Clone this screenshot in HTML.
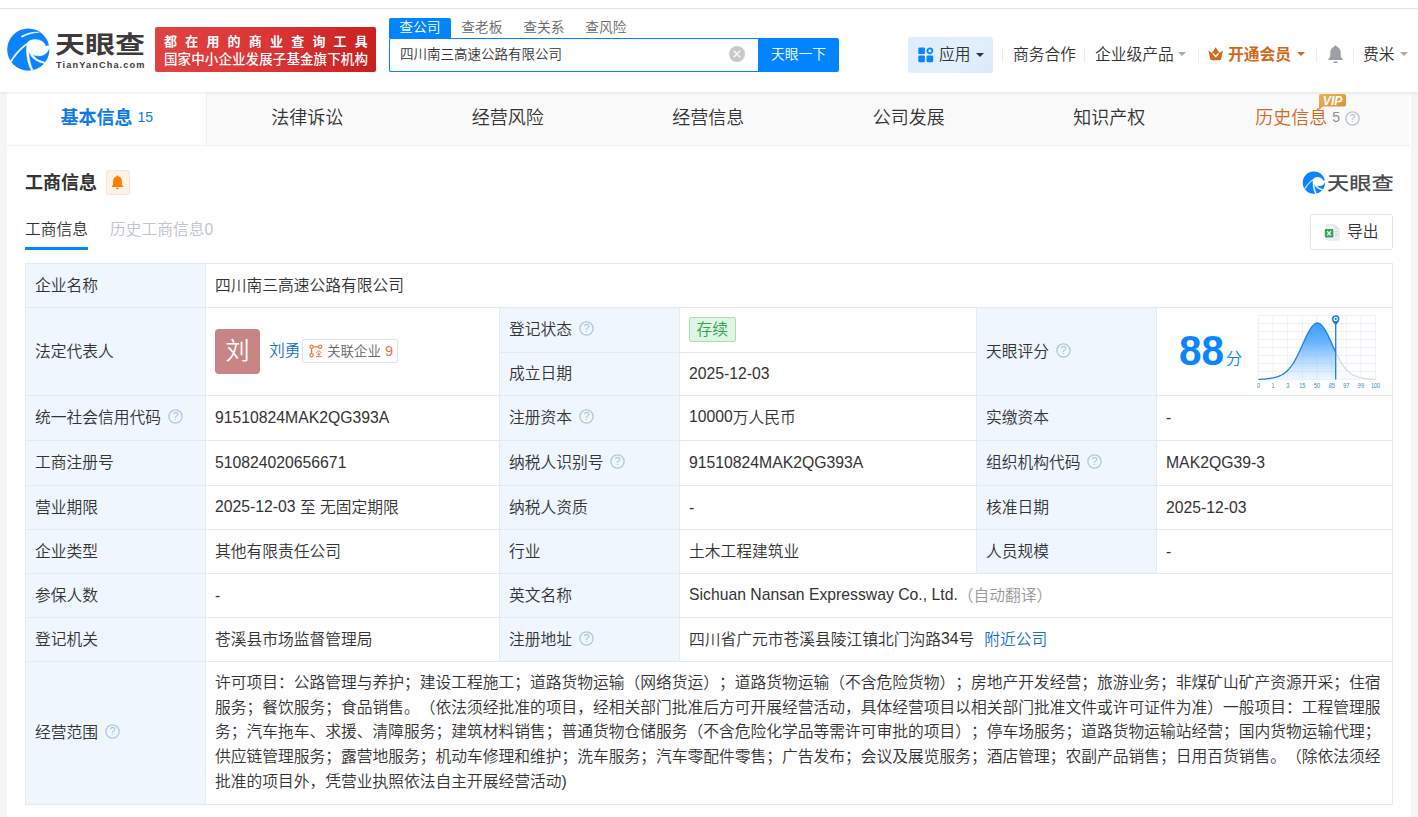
<!DOCTYPE html>
<html lang="zh-CN">
<head>
<meta charset="utf-8">
<title>四川南三高速公路有限公司 - 天眼查</title>
<style>
*{box-sizing:border-box;margin:0;padding:0}
html,body{width:1418px;height:817px;overflow:hidden;background:#f5f5f5}
body{position:relative;text-spacing-trim:space-all;font-weight:350;font-family:"Liberation Sans","Noto Sans CJK SC",sans-serif;font-size:15.75px;color:#333;-webkit-font-smoothing:antialiased}
.abs{position:absolute}
/* ---------- header ---------- */
#top{position:absolute;left:0;top:0;width:1418px;height:92px;background:#fff;box-shadow:0 1px 4px rgba(0,0,0,.09);z-index:5}
#topline{position:absolute;left:0;top:8px;width:1418px;height:1px;background:#e2e2e2}
#logo{position:absolute;left:7px;top:28px;width:43px;height:43px}
#logotxt{position:absolute;left:55px;top:24.5px;width:94px;height:40px;font-size:30px;font-weight:700;color:#3e3a39;line-height:40px;letter-spacing:0;white-space:nowrap;transform-origin:0 50%;transform:scale(1,.8)}
#logosub{position:absolute;left:56px;top:58.5px;font-size:9.2px;font-weight:700;color:#3e3a39;letter-spacing:1.12px;line-height:13px;white-space:nowrap}
#banner{position:absolute;left:155px;top:27px;width:221px;height:45px;border-radius:2px;background:linear-gradient(100deg,#e04343 0%,#dc3535 50%,#c91f1f 100%);color:#fff;font-weight:700;font-size:14px;white-space:nowrap}
#banner .l1{position:absolute;left:9px;top:6.5px;line-height:16px;font-size:13px;letter-spacing:8.2px}
#banner .l2{position:absolute;left:9px;top:25px;line-height:16px;font-size:13.5px;font-weight:500;letter-spacing:.1px}
#stabs{position:absolute;left:389px;top:18px;height:20px;display:flex;font-size:13.75px;line-height:20px;color:#666}
#stabs span{display:block;width:62px;text-align:center}
#stabs span.on{background:#0084ff;color:#fff;border-radius:2px 2px 0 0}
#sinput{position:absolute;left:389px;top:38px;width:370px;height:34px;border:1px solid #0084ff;border-right:none;border-radius:2px 0 0 2px;background:#fff;font-size:13.5px;line-height:32px;padding-left:10px;color:#333}
#sclear{position:absolute;left:729px;top:46px;width:16px;height:16px}
#sbtn{position:absolute;left:758px;top:38px;width:81px;height:34px;background:#0084ff;border-radius:0 2px 2px 0;color:#fff;font-size:13.75px;line-height:34px;text-align:center}
#app{position:absolute;left:908px;top:37px;width:85px;height:36px;border-radius:3px;background:linear-gradient(135deg,#deedfc 0%,#e3effc 60%,#d9e8f9 100%)}
.nav{position:absolute;top:43px;line-height:24px;font-size:15.75px;color:#333;white-space:nowrap}
.sep{position:absolute;top:48px;width:1px;height:14px;background:#ececec}
.caret{position:absolute;width:0;height:0;border-left:4px solid transparent;border-right:4px solid transparent;border-top:4.5px solid #aaa}
/* ---------- tabs ---------- */
#main{position:absolute;left:7px;top:92px;width:1404px;height:725px;background:#fff}
#tabs{position:absolute;left:-.5px;top:0;width:1403.5px;height:54px;background:#fafafa;border-bottom:1px solid #f2f2f2;display:flex}
#tabs .t{flex:1 1 0;text-align:center;font-size:18px;line-height:53px;color:#333;position:relative;white-space:nowrap}
#tabs .t.on{background:#fff;color:#0f7ae5;font-weight:700;box-shadow:inset -1px 0 0 #f0f0f0}
#tabs .t .n{position:relative;top:-2.5px;font-size:14px;font-weight:400;font-family:"Liberation Sans",sans-serif}
#tabs .t.his{color:#d2691e;left:-2px}
/* ---------- section ---------- */
#h2{position:absolute;left:25px;top:169px;font-size:18px;font-weight:700;line-height:28px;color:#333}
#bell{position:absolute;left:106px;top:170px;width:24px;height:25px;background:#fff3e8;border:1px solid #fde4d0;border-radius:2px}
#sub1{position:absolute;left:25px;top:218px;font-size:15.75px;line-height:24px;color:#333}
#sub1u{position:absolute;left:25px;top:247px;width:63px;height:3px;background:#0084ff}
#sub2{position:absolute;left:110px;top:218px;font-size:15.75px;line-height:24px;color:#c0c4cc}
#wm{position:absolute;left:1302px;top:170px;width:94px;height:24px}
#wmt{position:absolute;left:1327px;top:168px;font-size:22.3px;font-weight:500;color:#4b4b50;line-height:32px;white-space:nowrap;transform-origin:0 50%;transform:scale(1,.8)}
#exp{position:absolute;left:1310px;top:214px;width:83px;height:36px;border:1px solid #dfe3ea;border-radius:3px;background:#fff}
#exp span{position:absolute;left:36px;top:5px;line-height:24px;font-size:15.75px;color:#333}
/* ---------- table ---------- */
#tb{position:absolute;left:25px;top:263px;width:1368px;height:542px;background:#e3eaf1;padding:1px;display:grid;gap:1px;
grid-template-columns:179px 293px 179px 296px 179px 235px;
grid-template-rows:43px 44px 42px 44px 44px 43px 43px 43px 43px 142px}
#tb>div{background:#fff;display:flex;align-items:center;padding:0 9px;white-space:nowrap;line-height:24px;overflow:hidden}
#tb>div.l{background:#eff6fd;color:#333}
.q{display:inline-block;width:15px;height:15px;margin-left:6.7px;vertical-align:-2px;flex:none;position:relative;top:-1.5px}
a{color:#0f6fd6;text-decoration:none}

.av{display:block;width:45px;height:45px;border-radius:4px;background:#c98585;color:#fff;font-size:24px;line-height:44px;text-align:center;flex:none;margin-right:9px;position:relative;top:0}
.nm{position:relative;top:-1px}
.tag{display:flex;align-items:center;height:24.5px;border:1px solid #dfe3ea;border-radius:2px;margin-left:1.5px;padding:0 3.5px 0 6px;position:relative;top:-.5px;font-size:13.5px;color:#666;line-height:23px}
.tag svg{width:14px;height:14px;margin-right:4px}
.tag b{font-weight:400;color:#e8743b;margin-left:4px;font-size:14.5px}
.st{display:block;height:25px;padding:0 6.5px;border:1px solid #a9dfb6;border-radius:2px;background:#e0f6e5;color:#2ea44f;line-height:23px;position:relative;top:-.4px}
.sc{font-size:43px;font-weight:700;color:#0a84ff;line-height:44px;margin-left:13px;position:relative;top:-2px;display:inline-block;transform:scaleX(.94);transform-origin:0 50%;font-family:"Liberation Sans",sans-serif}
.fen{font-size:16.5px;color:#0a84ff;margin-left:-1px;position:relative;top:7px}
.gray{color:#999}
#scope p{line-height:24.75px;white-space:nowrap;position:relative;top:-.2px}
.lt{position:relative;top:-.8px}
</style>
</head>
<body>
<div id="top">
  <div id="topline"></div>
  <svg id="logo" viewBox="0 0 43 43" stroke="#fff" stroke-width=".45" stroke-linejoin="round">
    <circle cx="21.3" cy="21.6" r="21.1" fill="#0a84ff" stroke="none"/>
    <path d="M20.6 14.6 C22.5 11.6 28 10.6 32.5 12.2 C36 13.4 38.2 15.8 38.6 18.2 L43 17.6 L43 20.6 L41.9 20.4 C41.2 24.2 37.5 27.6 32 27.8 C27.5 28 23.6 26.4 22 23.6 C20.4 20.8 19.6 17.2 20.6 14.6 Z" fill="#fff"/>
    <path d="M23.2 13.2 C16 17 8.5 24.5 3.6 32.6 L4.6 33.8 C9.5 25.5 16.5 18.6 22.2 15.4 Z" fill="#fff"/>
    <path d="M20.4 15 C18.4 22 19.6 33 24.2 42.4 L26 42 C22 33 21 24 22.4 17 Z" fill="#fff"/>
    <path d="M21.8 23 C23.5 29.5 29.5 34 37 35.4 L37.8 34 C31 32.8 26 29 24 23.6 Z" fill="#fff"/>
    <path d="M14.2 8.2 C19.5 5.2 26.5 3.6 32.4 4.2 C26.5 4.6 20 6.4 15 9.2 Z" fill="#fff"/>
  </svg>
  <div id="logotxt">天眼查</div>
  <div id="logosub">TianYanCha.com</div>
  <div id="banner"><span class="l1">都在用的商业查询工具</span><span class="l2">国家中小企业发展子基金旗下机构</span></div>
  <div id="stabs"><span class="on">查公司</span><span>查老板</span><span>查关系</span><span>查风险</span></div>
  <div id="sinput">四川南三高速公路有限公司</div>
  <svg id="sclear" viewBox="0 0 16 16"><circle cx="8" cy="8" r="8" fill="#c9c9cd"/><path d="M5.2 5.2 L10.8 10.8 M10.8 5.2 L5.2 10.8" stroke="#fff" stroke-width="1.3" stroke-linecap="round"/></svg>
  <div id="sbtn">天眼一下</div>
  <div id="app"></div>
  <svg class="abs" style="left:918px;top:47px;width:16px;height:16px" viewBox="0 0 16 16"><rect x="0.3" y="0.5" width="6.6" height="6.6" rx="1.2" fill="#0a84ff"/><rect x="0.3" y="8.6" width="6.6" height="6.6" rx="1.2" fill="#0a84ff"/><rect x="8.6" y="8.6" width="6.6" height="6.6" rx="1.2" fill="#0a84ff"/><circle cx="11.9" cy="3.8" r="2.5" fill="none" stroke="#0a84ff" stroke-width="1.7"/></svg>
  <div class="nav" style="left:939px">应用</div>
  <div class="caret" style="left:976px;top:53px;border-top-color:#333"></div>
  <div class="sep" style="left:1002px"></div>
  <div class="nav" style="left:1013px">商务合作</div>
  <div class="sep" style="left:1084px"></div>
  <div class="nav" style="left:1095px">企业级产品</div>
  <div class="caret" style="left:1178px;top:52px"></div>
  <div class="sep" style="left:1198px"></div>
  <svg class="abs" style="left:1208px;top:47px;width:16px;height:14px" viewBox="0 0 16 14"><path d="M0.4 3.6 L3.9 6 L7.7 0.3 L11.5 6 L15 3.6 L13.3 11.4 C13.1 12.6 12.3 13.3 11.1 13.3 L4.3 13.3 C3.1 13.3 2.3 12.6 2.1 11.4 Z" fill="#d4681a"/><path d="M5.3 6.9 L7.7 9.6 L10.1 6.9" fill="none" stroke="#fff" stroke-width="1.5" stroke-linecap="round" stroke-linejoin="round"/></svg>
  <div class="nav" style="left:1228px;font-weight:700;color:#d4681a">开通会员</div>
  <div class="caret" style="left:1297px;top:52px;border-top-color:#d4681a"></div>
  <div class="sep" style="left:1316px"></div>
  <svg class="abs" style="left:1327px;top:45px;width:17px;height:19px" viewBox="0 0 17 19"><path d="M8.5 0.6 C9.2 0.6 9.7 1.1 9.7 1.8 C12.1 2.4 13.7 4.5 13.7 7.2 L13.7 11.6 L15.6 14.2 L15.6 15 L1.4 15 L1.4 14.2 L3.3 11.6 L3.3 7.2 C3.3 4.5 4.9 2.4 7.3 1.8 C7.3 1.1 7.8 0.6 8.5 0.6 Z" fill="#9b9ea4"/><rect x="6.3" y="16.4" width="4.4" height="1.5" rx=".7" fill="#9b9ea4"/></svg>
  <div class="sep" style="left:1353px"></div>
  <div class="nav" style="left:1363px">费米</div>
  <div class="caret" style="left:1400px;top:52px"></div>
</div>
<div id="main">
  <div id="tabs">
    <div class="t on">基本信息 <span class="n">15</span></div>
    <div class="t">法律诉讼</div>
    <div class="t">经营风险</div>
    <div class="t">经营信息</div>
    <div class="t">公司发展</div>
    <div class="t">知识产权</div>
    <div class="t his">历史信息<span class="n" style="color:#8a919c;margin-left:5px">5</span><svg class="q" style="margin-left:5px;vertical-align:-2px;top:-.5px" viewBox="0 0 15 15"><circle cx="7.5" cy="7.5" r="6.6" fill="none" stroke="#b9c4d1" stroke-width="1.3"/><text x="7.5" y="11.4" text-anchor="middle" font-family="Liberation Sans,sans-serif" font-size="10.8" fill="#b3bfcd">?</text></svg></div>
  </div>
</div>
<svg class="abs" style="left:1318px;top:93px;width:30px;height:18px;z-index:6" viewBox="0 0 30 18"><defs><linearGradient id="vg" x1="0" y1="0" x2="1" y2="1"><stop offset="0" stop-color="#eeb153"/><stop offset="1" stop-color="#dc8d2c"/></linearGradient></defs><path d="M3 1 L26 1 Q28 1 28 3 L28 11.6 Q28 13.6 26 13.6 L5 13.6 L1 17 L1 3 Q1 1 3 1 Z" fill="url(#vg)"/><text x="14.6" y="11.9" text-anchor="middle" font-family="Liberation Sans,sans-serif" font-size="12.2" font-weight="700" font-style="italic" fill="#fff">VIP</text></svg>
<div id="h2">工商信息</div>
<div id="bell"><svg style="position:absolute;left:4.3px;top:4px;width:13px;height:15px" viewBox="0 0 13 15"><path d="M6.5 0.5 C7.1 0.5 7.5 0.9 7.5 1.4 C9.6 1.9 10.9 3.7 10.9 5.9 L10.9 9.4 L12.3 11.4 L12.3 12 L0.7 12 L0.7 11.4 L2.1 9.4 L2.1 5.9 C2.1 3.7 3.4 1.9 5.5 1.4 C5.5 0.9 5.9 0.5 6.5 0.5 Z" fill="#ff7d00"/><path d="M4.9 12.8 L8.1 12.8 C8 13.7 7.3 14.3 6.5 14.3 C5.7 14.3 5 13.7 4.9 12.8 Z" fill="#ff7d00"/></svg></div>
<div id="sub1">工商信息</div><div id="sub1u"></div>
<div id="sub2">历史工商信息0</div>
<svg id="wm" viewBox="0 0 94 24">
  <g transform="translate(0.6,1.2) scale(0.53)" stroke="#fff" stroke-width=".7" stroke-linejoin="round">
    <circle cx="21.3" cy="21.6" r="21.1" fill="#0a84ff" stroke="none"/>
    <path d="M20.6 14.6 C22.5 11.6 28 10.6 32.5 12.2 C36 13.4 38.2 15.8 38.6 18.2 L43 17.6 L43 20.6 L41.9 20.4 C41.2 24.2 37.5 27.6 32 27.8 C27.5 28 23.6 26.4 22 23.6 C20.4 20.8 19.6 17.2 20.6 14.6 Z" fill="#fff"/>
    <path d="M23.2 13.2 C16 17 8.5 24.5 3.6 32.6 L4.6 33.8 C9.5 25.5 16.5 18.6 22.2 15.4 Z" fill="#fff"/>
    <path d="M20.4 15 C18.4 22 19.6 33 24.2 42.4 L26 42 C22 33 21 24 22.4 17 Z" fill="#fff"/>
    <path d="M21.8 23 C23.5 29.5 29.5 34 37 35.4 L37.8 34 C31 32.8 26 29 24 23.6 Z" fill="#fff"/>
  </g>
</svg>
<div id="wmt">天眼查</div>
<div id="exp"><svg style="position:absolute;left:13px;top:9px;width:17px;height:17px" viewBox="0 0 17 17"><path d="M3.5 0.8 L11 0.8 L15 4.8 L15 15 Q15 16 14 16 L3.5 16 Q2.5 16 2.5 15 L2.5 1.8 Q2.5 0.8 3.5 0.8 Z" fill="#f1f2f4" stroke="#d5d8de" stroke-width=".8"/><path d="M11 0.8 L11 4.8 L15 4.8" fill="#e2e4e8" stroke="#d5d8de" stroke-width=".6"/><path d="M11 7.6 h2.6 M11 9.8 h2.6 M11 12 h2.6" stroke="#c4c8cf" stroke-width=".9"/><rect x="0.8" y="5" width="8.6" height="8.6" rx="1" fill="#2ea45c"/><path d="M3.2 7.2 L7 11.4 M7 7.2 L3.2 11.4" stroke="#fff" stroke-width="1.3"/></svg><span>导出</span></div>
<div id="tb">
  <div class="l">企业名称</div><div style="grid-column:2/7">四川南三高速公路有限公司</div>
  <div class="l" style="grid-row:2/4;grid-column:1">法定代表人</div>
  <div style="grid-row:2/4;grid-column:2"><span class="av">刘</span><a class="nm">刘勇</a><span class="tag"><svg viewBox="0 0 14 14"><circle cx="2.6" cy="2.8" r="1.6" fill="none" stroke="#ee7a3a" stroke-width="1.25"/><circle cx="11.2" cy="2.8" r="1.6" fill="none" stroke="#ee7a3a" stroke-width="1.25"/><circle cx="2.6" cy="11.2" r="1.6" fill="none" stroke="#ee7a3a" stroke-width="1.25"/><path d="M4.2 2.8 H9.6 M2.6 4.4 V9.6" stroke="#ee7a3a" stroke-width="1.25"/><path d="M9.8 6.6 L7.2 9 M9.8 6.6 L12.6 9 M9.8 8.6 V12 M8.4 10.2 H11.4 M7 12.6 H12.8" stroke="#ee7a3a" stroke-width="1" fill="none"/></svg>关联企业<b>9</b></span></div>
  <div class="l" style="grid-row:2;grid-column:3;padding-top:0">登记状态<svg class="q" viewBox="0 0 15 15"><circle cx="7.5" cy="7.5" r="6.6" fill="none" stroke="#b0c8de" stroke-width="1.3"/><text x="7.5" y="11.4" text-anchor="middle" font-family="Liberation Sans,sans-serif" font-size="10.8" fill="#a5bfd8">?</text></svg></div><div style="grid-row:2;grid-column:4"><span class="st">存续</span></div>
  <div class="l" style="grid-row:2/4;grid-column:5">天眼评分<svg class="q" viewBox="0 0 15 15"><circle cx="7.5" cy="7.5" r="6.6" fill="none" stroke="#b0c8de" stroke-width="1.3"/><text x="7.5" y="11.4" text-anchor="middle" font-family="Liberation Sans,sans-serif" font-size="10.8" fill="#a5bfd8">?</text></svg></div>
  <div style="grid-row:2/4;grid-column:6;position:relative" id="score"><span class="sc">88</span><span class="fen">分</span><svg style="position:absolute;left:96px;top:4px;width:132px;height:80px" viewBox="0 0 132 80"><defs><linearGradient id="cg" x1="0" y1="0" x2="0" y2="1"><stop offset="0" stop-color="#3d9cff"/><stop offset=".35" stop-color="#5aabff" stop-opacity=".9"/><stop offset="1" stop-color="#8cc4ff" stop-opacity=".12"/></linearGradient></defs><path d="M5.4 3.5V67.4M20.0 3.5V67.4M34.7 3.5V67.4M49.3 3.5V67.4M64.0 3.5V67.4M78.7 3.5V67.4M93.3 3.5V67.4M107.9 3.5V67.4M122.6 3.5V67.4M5.4 3.5H122.6M5.4 11.5H122.6M5.4 19.5H122.6M5.4 27.5H122.6M5.4 35.5H122.6M5.4 43.4H122.6M5.4 51.4H122.6M5.4 59.4H122.6M5.4 67.4H122.6" fill="none" stroke="#edf2f8" stroke-width="1"/><path d="M5.4 67.4 L6.9 67.3 L8.5 67.2 L10.0 67.1 L11.6 67.0 L13.1 66.8 L14.7 66.6 L16.2 66.5 L17.8 66.2 L19.3 66.0 L20.9 65.7 L22.4 65.3 L24.0 64.9 L25.5 64.4 L27.0 63.7 L28.6 63.0 L30.1 62.1 L31.7 61.0 L33.2 59.8 L34.8 58.3 L36.3 56.6 L37.9 54.7 L39.4 52.5 L41.0 50.1 L42.5 47.4 L44.0 44.5 L45.6 41.3 L47.1 38.0 L48.7 34.6 L50.2 31.2 L51.8 27.7 L53.3 24.4 L54.9 21.3 L56.4 18.4 L58.0 16.0 L59.5 13.9 L61.1 12.4 L62.6 11.4 L64.1 11.0 L65.7 11.2 L67.2 12.0 L68.8 13.4 L70.3 15.2 L71.9 17.6 L73.4 20.3 L75.0 23.4 L76.5 26.6 L78.1 30.0 L79.6 33.5 L81.2 36.9 L82.7 40.3 L82.7 67.4 L5.4 67.4Z" fill="url(#cg)"/><path d="M82.7 40.3 L84.0 43.0 L85.4 45.6 L86.7 48.1 L88.0 50.4 L89.3 52.5 L90.7 54.4 L92.0 56.1 L93.3 57.6 L94.7 59.0 L96.0 60.2 L97.3 61.2 L98.7 62.1 L100.0 62.9 L101.3 63.5 L102.7 64.1 L104.0 64.6 L105.3 65.0 L106.6 65.4 L108.0 65.7 L109.3 65.9 L110.6 66.2 L112.0 66.4 L113.3 66.5 L114.6 66.7 L115.9 66.8 L117.3 67.0 L118.6 67.1 L119.9 67.2 L121.3 67.3 L122.6 67.4 L122.6 67.4 L82.7 67.4Z" fill="#f3f5f8" fill-opacity=".55"/><path d="M82.7 40.3 L84.0 43.0 L85.4 45.6 L86.7 48.1 L88.0 50.4 L89.3 52.5 L90.7 54.4 L92.0 56.1 L93.3 57.6 L94.7 59.0 L96.0 60.2 L97.3 61.2 L98.7 62.1 L100.0 62.9 L101.3 63.5 L102.7 64.1 L104.0 64.6 L105.3 65.0 L106.6 65.4 L108.0 65.7 L109.3 65.9 L110.6 66.2 L112.0 66.4 L113.3 66.5 L114.6 66.7 L115.9 66.8 L117.3 67.0 L118.6 67.1 L119.9 67.2 L121.3 67.3 L122.6 67.4" fill="none" stroke="#d3d8de" stroke-width="1.1"/><path d="M5.4 67.4 L6.9 67.3 L8.5 67.2 L10.0 67.1 L11.6 67.0 L13.1 66.8 L14.7 66.6 L16.2 66.5 L17.8 66.2 L19.3 66.0 L20.9 65.7 L22.4 65.3 L24.0 64.9 L25.5 64.4 L27.0 63.7 L28.6 63.0 L30.1 62.1 L31.7 61.0 L33.2 59.8 L34.8 58.3 L36.3 56.6 L37.9 54.7 L39.4 52.5 L41.0 50.1 L42.5 47.4 L44.0 44.5 L45.6 41.3 L47.1 38.0 L48.7 34.6 L50.2 31.2 L51.8 27.7 L53.3 24.4 L54.9 21.3 L56.4 18.4 L58.0 16.0 L59.5 13.9 L61.1 12.4 L62.6 11.4 L64.1 11.0 L65.7 11.2 L67.2 12.0 L68.8 13.4 L70.3 15.2 L71.9 17.6 L73.4 20.3 L75.0 23.4 L76.5 26.6 L78.1 30.0 L79.6 33.5 L81.2 36.9 L82.7 40.3" fill="none" stroke="#1b80ea" stroke-width="1.3"/><path d="M82.7 9V67.4" stroke="#1b7ce2" stroke-width="1.3"/><path d="M82.7 13.6 C81.5 11.6 78.9 9.8 78.9 7 A3.8 3.8 0 1 1 86.5 7 C86.5 9.8 83.9 11.6 82.7 13.6Z" fill="#1b7ce2"/><circle cx="82.7" cy="6.9" r="2.2" fill="#fff"/><circle cx="82.7" cy="6.9" r="1.1" fill="#1b7ce2"/><g font-family="Liberation Sans,sans-serif" font-size="6.5" fill="#2f88e4"><text transform="translate(5.4,75.6) scale(.84,1)" text-anchor="middle">0</text><text transform="translate(20.0,75.6) scale(.84,1)" text-anchor="middle">1</text><text transform="translate(34.7,75.6) scale(.84,1)" text-anchor="middle">3</text><text transform="translate(49.3,75.6) scale(.84,1)" text-anchor="middle">15</text><text transform="translate(64.0,75.6) scale(.84,1)" text-anchor="middle">50</text><text transform="translate(78.7,75.6) scale(.84,1)" text-anchor="middle">85</text><text transform="translate(93.3,75.6) scale(.84,1)" text-anchor="middle">97</text><text transform="translate(107.9,75.6) scale(.84,1)" text-anchor="middle">99</text><text transform="translate(122.6,75.6) scale(.84,1)" text-anchor="middle">100</text></g></svg></div>
  <div class="l" style="grid-row:3;grid-column:3;padding-top:0">成立日期</div><div style="grid-row:3;grid-column:4">2025-12-03</div>
  <div class="l">统一社会信用代码<svg class="q" viewBox="0 0 15 15"><circle cx="7.5" cy="7.5" r="6.6" fill="none" stroke="#b0c8de" stroke-width="1.3"/><text x="7.5" y="11.4" text-anchor="middle" font-family="Liberation Sans,sans-serif" font-size="10.8" fill="#a5bfd8">?</text></svg></div><div>91510824MAK2QG393A</div><div class="l">注册资本<svg class="q" viewBox="0 0 15 15"><circle cx="7.5" cy="7.5" r="6.6" fill="none" stroke="#b0c8de" stroke-width="1.3"/><text x="7.5" y="11.4" text-anchor="middle" font-family="Liberation Sans,sans-serif" font-size="10.8" fill="#a5bfd8">?</text></svg></div><div><span class="lt">10000</span>万人民币</div><div class="l">实缴资本</div><div>-</div>
  <div class="l">工商注册号</div><div>510824020656671</div><div class="l">纳税人识别号<svg class="q" viewBox="0 0 15 15"><circle cx="7.5" cy="7.5" r="6.6" fill="none" stroke="#b0c8de" stroke-width="1.3"/><text x="7.5" y="11.4" text-anchor="middle" font-family="Liberation Sans,sans-serif" font-size="10.8" fill="#a5bfd8">?</text></svg></div><div>91510824MAK2QG393A</div><div class="l">组织机构代码<svg class="q" viewBox="0 0 15 15"><circle cx="7.5" cy="7.5" r="6.6" fill="none" stroke="#b0c8de" stroke-width="1.3"/><text x="7.5" y="11.4" text-anchor="middle" font-family="Liberation Sans,sans-serif" font-size="10.8" fill="#a5bfd8">?</text></svg></div><div>MAK2QG39-3</div>
  <div class="l">营业期限</div><div><span class="lt">2025-12-03</span>&nbsp;至 无固定期限</div><div class="l">纳税人资质</div><div>-</div><div class="l">核准日期</div><div>2025-12-03</div>
  <div class="l">企业类型</div><div>其他有限责任公司</div><div class="l">行业</div><div>土木工程建筑业</div><div class="l">人员规模</div><div>-</div>
  <div class="l">参保人数</div><div>-</div><div class="l">英文名称</div><div style="grid-column:4/7"><span class="lt">Sichuan Nansan Expressway Co., Ltd.</span><span class="gray">（自动翻译）</span></div>
  <div class="l">登记机关</div><div>苍溪县市场监督管理局</div><div class="l">注册地址<svg class="q" viewBox="0 0 15 15"><circle cx="7.5" cy="7.5" r="6.6" fill="none" stroke="#b0c8de" stroke-width="1.3"/><text x="7.5" y="11.4" text-anchor="middle" font-family="Liberation Sans,sans-serif" font-size="10.8" fill="#a5bfd8">?</text></svg></div><div style="grid-column:4/7">四川省广元市苍溪县陵江镇北门沟路<span class="lt">34</span>号<a style="margin-left:10px">附近公司</a></div>
  <div class="l">经营范围<svg class="q" viewBox="0 0 15 15"><circle cx="7.5" cy="7.5" r="6.6" fill="none" stroke="#b0c8de" stroke-width="1.3"/><text x="7.5" y="11.4" text-anchor="middle" font-family="Liberation Sans,sans-serif" font-size="10.8" fill="#a5bfd8">?</text></svg></div>
  <div style="grid-column:2/7" id="scope"><p>许可项目：公路管理与养护；建设工程施工；道路货物运输（网络货运）；道路货物运输（不含危险货物）；房地产开发经营；旅游业务；非煤矿山矿产资源开采；住宿<br>服务；餐饮服务；食品销售。（依法须经批准的项目，经相关部门批准后方可开展经营活动，具体经营项目以相关部门批准文件或许可证件为准）一般项目：工程管理服<br>务；汽车拖车、求援、清障服务；建筑材料销售；普通货物仓储服务（不含危险化学品等需许可审批的项目）；停车场服务；道路货物运输站经营；国内货物运输代理；<br>供应链管理服务；露营地服务；机动车修理和维护；洗车服务；汽车零配件零售；广告发布；会议及展览服务；酒店管理；农副产品销售；日用百货销售。（除依法须经<br>批准的项目外，凭营业执照依法自主开展经营活动)</p></div>
</div>
</body>
</html>
